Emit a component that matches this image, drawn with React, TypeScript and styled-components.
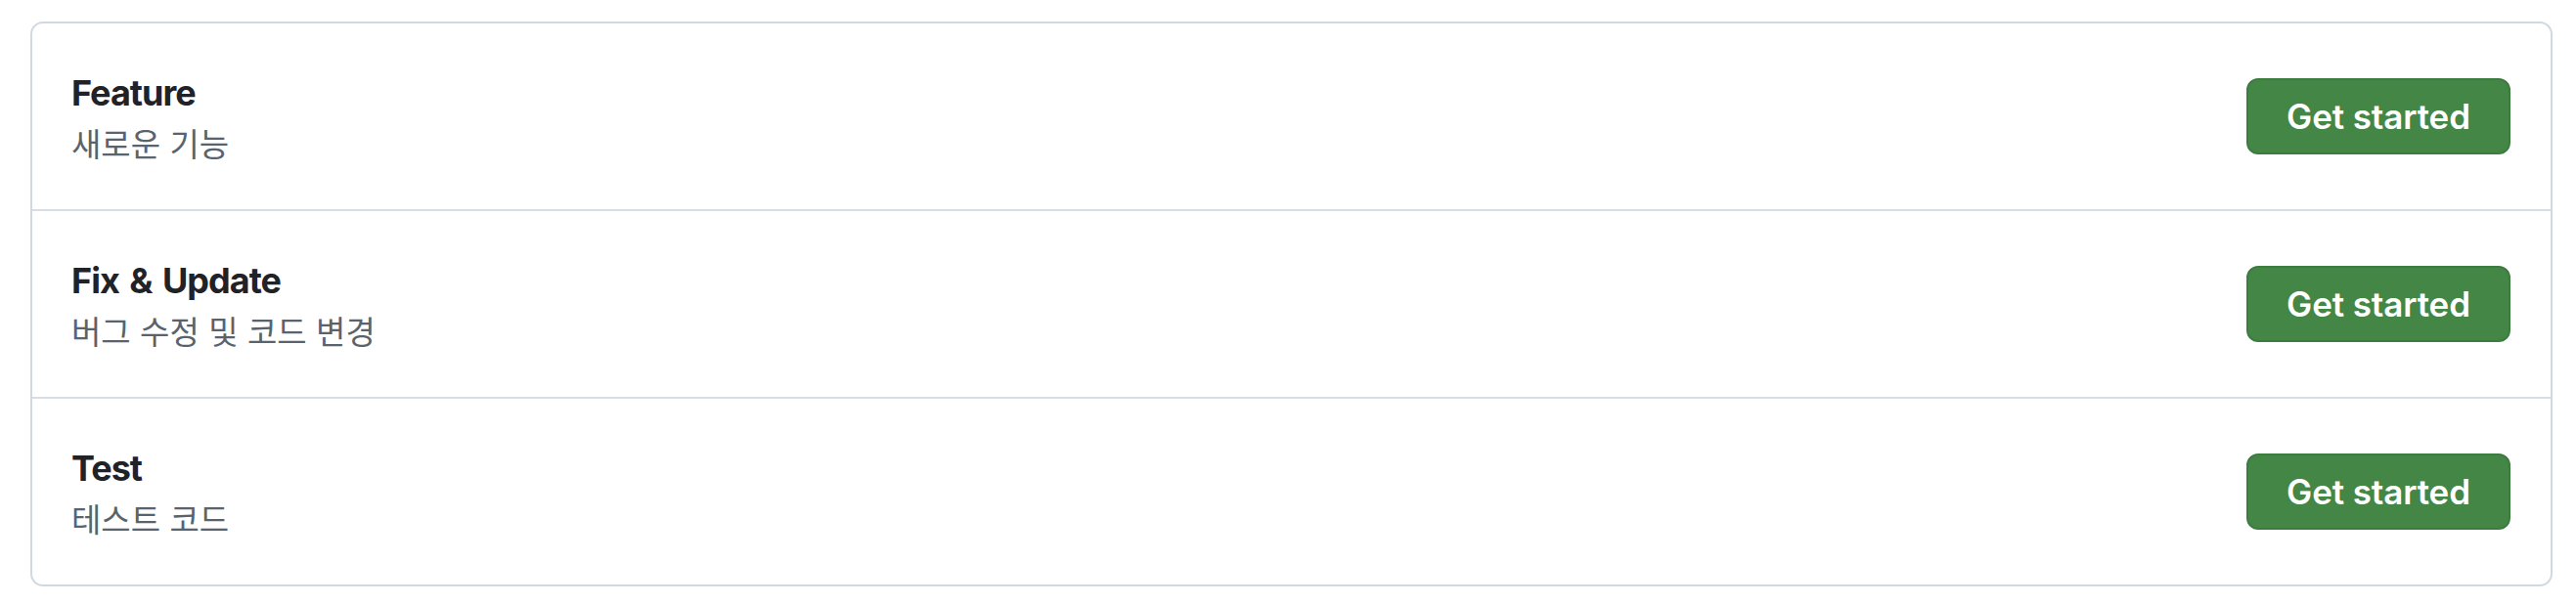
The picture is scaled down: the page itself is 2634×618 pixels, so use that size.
import React from "react";
import styled, { createGlobalStyle } from "styled-components";

const GlobalStyle = createGlobalStyle`
  html, body {
    margin: 0;
    padding: 0;
    background: #ffffff;
  }
  body {
    font-family: Inter, "Noto Sans", "Noto Sans CJK KR", sans-serif;
  }
`;

const Page = styled.div`
  padding: 22px 24px 0 31px;
`;

const Box = styled.div`
  border: 2px solid #d1d9e0;
  border-radius: 13px;
  background: #ffffff;
  overflow: hidden;
`;

const Row = styled.div`
  display: flex;
  align-items: center;
  justify-content: space-between;
  height: 190px;
  padding: 0 41px 0 40px;
  box-sizing: content-box;
  & + & {
    border-top: 2px solid #d8dee4;
  }
`;

const Info = styled.div`
  display: flex;
  flex-direction: column;
  padding-top: 2px;
`;

const Title = styled.div`
  font-family: Inter, "Noto Sans", sans-serif;
  font-weight: 700;
  font-size: 36px;
  line-height: 52px;
  letter-spacing: -1px;
  word-spacing: 3px;
  color: #1f2328;
`;

const Subtitle = styled.div`
  font-family: "Noto Sans CJK KR", "Noto Sans", sans-serif;
  font-weight: 400;
  font-size: 33px;
  line-height: 50px;
  word-spacing: 2px;
  color: #59636e;
`;

const Button = styled.button`
  width: 270px;
  height: 78px;
  border-radius: 12px;
  border: 2px solid #3d7c41;
  background: #438645;
  color: #ffffff;
  font-family: Inter, "Noto Sans", sans-serif;
  font-weight: 600;
  font-size: 35px;
  letter-spacing: -0.1px;
  cursor: pointer;
  display: flex;
  align-items: center;
  justify-content: center;
  padding: 0;
`;

const items = [
  { title: "Feature", desc: "새로운 기능" },
  { title: "Fix & Update", desc: "버그 수정 및 코드 변경" },
  { title: "Test", desc: "테스트 코드" },
];

export default function App() {
  return (
    <>
      <GlobalStyle />
      <Page>
        <Box>
          {items.map((it) => (
            <Row key={it.title}>
              <Info>
                <Title>{it.title}</Title>
                <Subtitle>{it.desc}</Subtitle>
              </Info>
              <Button>Get started</Button>
            </Row>
          ))}
        </Box>
      </Page>
    </>
  );
}
